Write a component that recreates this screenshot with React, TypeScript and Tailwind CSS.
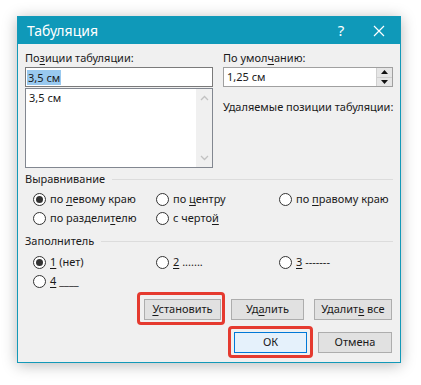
const U = ({ children }: { children: React.ReactNode }) => (
  <span className="underline underline-offset-2">{children}</span>
);

const Radio = ({ checked = false }: { checked?: boolean }) => (
  <span className="w-[13px] h-[13px] rounded-full border border-[#333] bg-white flex items-center justify-center shrink-0">
    {checked && <span className="w-[7px] h-[7px] rounded-full bg-[#333]" />}
  </span>
);

const Option = ({ checked, children, w }: { checked?: boolean; children: React.ReactNode; w: string }) => (
  <label className={`flex items-center gap-[4px] h-[19px] ${w}`}>
    <Radio checked={checked} />
    <span>{children}</span>
  </label>
);

const Group = ({ title }: { title: string }) => (
  <div className="flex items-center gap-[7px] h-[16px]">
    <span>{title}</span>
    <span className="flex-1 h-px bg-[#dcdcdc]" />
  </div>
);

const Btn = ({ children, w, primary = false }: { children: React.ReactNode; w: string; primary?: boolean }) => (
  <button
    className={`${w} h-[21px] flex items-center justify-center border ${
      primary ? 'border-[#0078d7] bg-[#e5f1fb]' : 'border-[#adadad] bg-[#e1e1e1]'
    }`}
  >
    <span>{children}</span>
  </button>
);

const App = () => {
  return (
    <div
      className="w-[421px] h-[385px] bg-white pt-[16px] pl-[17px] text-[11px] text-[#1a1a1a]"
      style={{ fontFamily: '"Noto Sans", "Liberation Sans", sans-serif' }}
    >
      <div className="w-[384px] h-[347px] border border-[#1399b8] bg-[#f0f0f0] flex flex-col shadow-[0_2px_14px_rgba(0,0,0,0.28)]">
        {/* Title bar */}
        <div className="h-[27px] bg-[#0f99b9] text-white flex items-center pl-[9px] pr-[15px]">
          <span className="text-[14px] flex-1">Табуляция</span>
          <span className="text-[15px] w-[16px] text-center mr-[24px]">?</span>
          <svg width="12" height="12" viewBox="0 0 12 12" stroke="white" strokeWidth="1.2">
            <path d="M1 1L11 11M11 1L1 11" />
          </svg>
        </div>

        <div className="flex flex-col pl-[7px] pr-[7px] pt-[6px]">
          {/* Top section */}
          <div className="flex gap-[10px]">
            <div className="w-[189px] flex flex-col">
              <span className="h-[16px] leading-[16px]">
                По<U>з</U>иции табуляции:
              </span>
              <div className="mt-[1px] h-[20px] bg-white border border-[#7a7a7a] flex items-center px-[1px]">
                <span className="bg-[#99c9ef] px-px leading-[15px]">3,5 см</span>
              </div>
              <div className="mt-px h-[80px] bg-white border border-[#828790] flex">
                <div className="flex-1 px-[3px] pt-[1px] leading-[16px]">3,5 см</div>
                <div className="w-[16px] bg-[#f0f0f0] flex flex-col items-center justify-between py-[6px]">
                  <svg width="9" height="6" viewBox="0 0 9 6" fill="none" stroke="#c2c2c2" strokeWidth="1.3">
                    <path d="M1 5L4.5 1.5L8 5" />
                  </svg>
                  <svg width="9" height="6" viewBox="0 0 9 6" fill="none" stroke="#c2c2c2" strokeWidth="1.3">
                    <path d="M1 1L4.5 4.5L8 1" />
                  </svg>
                </div>
              </div>
            </div>
            <div className="w-[170px] flex flex-col">
              <span className="h-[16px] leading-[16px]">
                По умол<U>ч</U>анию:
              </span>
              <div className="mt-[1px] h-[20px] bg-white border border-[#a0a0a0] flex items-center pl-[3px]">
                <span className="flex-1">1,25 см</span>
                <div className="w-[16px] h-full flex flex-col border-l border-[#d0d0d0]">
                  <div className="flex-1 bg-[#e6e6e6] border-b border-[#d0d0d0] flex items-center justify-center">
                    <svg width="7" height="4" viewBox="0 0 7 4"><path d="M0 4L3.5 0L7 4Z" fill="#111" /></svg>
                  </div>
                  <div className="flex-1 bg-[#e6e6e6] flex items-center justify-center">
                    <svg width="7" height="4" viewBox="0 0 7 4"><path d="M0 0L3.5 4L7 0Z" fill="#111" /></svg>
                  </div>
                </div>
              </div>
              <span className="mt-[12px] leading-[16px] whitespace-nowrap">Удаляемые позиции табуляции:</span>
            </div>
          </div>

          {/* Alignment */}
          <div className="mt-[3px]">
            <Group title="Выравнивание" />
          </div>
          <div className="pl-[8px] mt-[3px] flex flex-col">
            <div className="flex">
              <Option checked w="w-[123px]">
                по <U>л</U>евому краю
              </Option>
              <Option w="w-[123px]">
                по <U>ц</U>ентру
              </Option>
              <Option w="">
                по <U>п</U>равому краю
              </Option>
            </div>
            <div className="flex">
              <Option w="w-[123px]">
                по раздели<U>т</U>елю
              </Option>
              <Option w="">
                с черто<U>й</U>
              </Option>
            </div>
          </div>

          {/* Leader */}
          <div className="mt-[5px]">
            <Group title="Заполнитель" />
          </div>
          <div className="pl-[8px] mt-[4px] flex flex-col">
            <div className="flex">
              <Option checked w="w-[123px]">
                <U>1</U> (нет)
              </Option>
              <Option w="w-[123px]">
                <U>2</U> .......
              </Option>
              <Option w="">
                <U>3</U> -------
              </Option>
            </div>
            <div className="flex">
              <Option w="">
                <U>4</U> ____
              </Option>
            </div>
          </div>

          {/* Buttons */}
          <div className="flex justify-end gap-[10px] mt-[8px] pr-[1px]">
            <div className="relative">
              <span className="absolute top-[-7px] bottom-[-5px] left-[-7px] right-[-4px] border-[3px] border-[#e53a2f] rounded-[4px]" />
              <Btn w="w-[77px]">
                <U>У</U>становить
              </Btn>
            </div>
            <Btn w="w-[73px]">
              Уд<U>а</U>лить
            </Btn>
            <Btn w="w-[78px]">
              Удалит<U>ь</U> все
            </Btn>
          </div>
          <div className="flex justify-end gap-[11px] mt-[12px] pr-[1px]">
            <div className="relative">
              <span className="absolute top-[-6px] bottom-[-5px] left-[-6px] right-[-6px] border-[3px] border-[#e53a2f] rounded-[4px]" />
              <Btn w="w-[73px]" primary>
                ОК
              </Btn>
            </div>
            <Btn w="w-[74px]">Отмена</Btn>
          </div>
        </div>
      </div>
    </div>
  );
};

export default App;
